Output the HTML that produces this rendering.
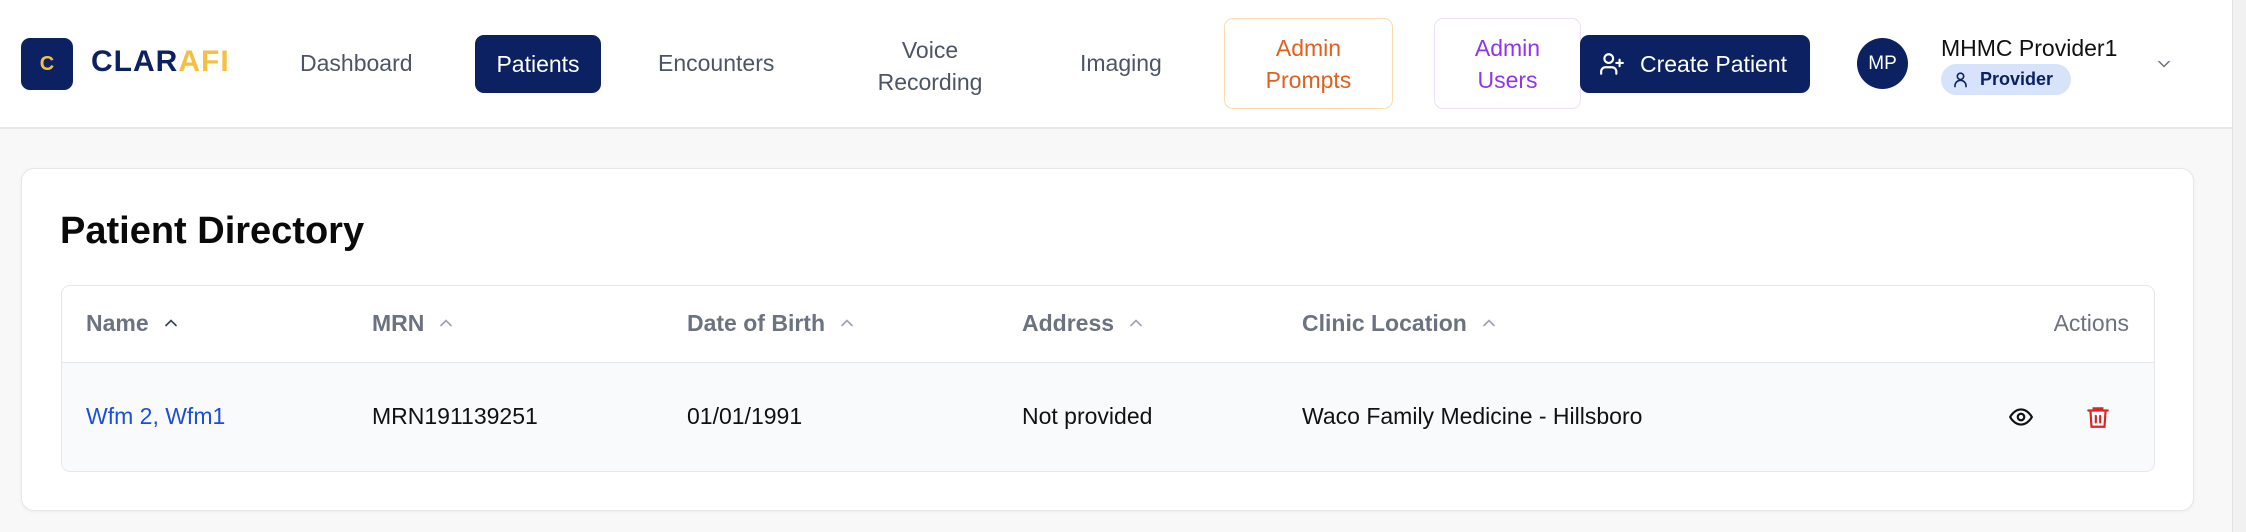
<!DOCTYPE html>
<html><head><meta charset="utf-8"><style>
*{box-sizing:border-box;margin:0;padding:0}
body{width:2246px;height:532px;background:#f8f8f9;font-family:"Liberation Sans",sans-serif;position:relative;overflow:hidden;color:#111827}
.a{position:absolute}
.hdr{left:0;top:0;width:2232px;height:129px;background:#fff;border-bottom:2px solid #e5e7eb}
.nav{font-size:23px;color:#4b5563;white-space:nowrap}
.sb{left:2232px;top:0;width:14px;height:532px;background:#f1f1f1;border-left:1px solid #e2e2e2}
.th{font-size:23px;color:#6b7280;font-weight:bold;top:310px;white-space:nowrap}
.td{font-size:23px;color:#111;top:403px;white-space:nowrap}
.car{display:inline-block;margin-left:12px;vertical-align:-2px}
</style></head><body>
<div class="a hdr"></div>
<div class="a sb"></div>
<div class="a" style="left:21px;top:38px;width:52px;height:52px;background:#0b2161;border-radius:9px;color:#f5c042;font-weight:bold;font-size:20px;text-align:center;line-height:52px">C</div>
<div class="a" style="left:91px;top:45px;font-size:30px;font-weight:bold;color:#0b2161;letter-spacing:1px">CLAR<span style="color:#f5c042">AFI</span></div>
<div class="a nav" style="left:300px;top:50px">Dashboard</div>
<div class="a" style="left:475px;top:35px;width:126px;height:58px;background:#0b2161;border-radius:9px;color:#fff;font-size:23px;text-align:center;line-height:58px">Patients</div>
<div class="a nav" style="left:658px;top:50px">Encounters</div>
<div class="a nav" style="left:860px;top:34px;width:140px;text-align:center;line-height:32px">Voice<br>Recording</div>
<div class="a nav" style="left:1080px;top:50px">Imaging</div>
<div class="a" style="left:1224px;top:18px;width:169px;height:91px;border:1.5px solid #fcd9ae;border-radius:9px;color:#e0601f;font-size:23px;text-align:center;line-height:32px;padding-top:13px">Admin<br>Prompts</div>
<div class="a" style="left:1434px;top:18px;width:147px;height:91px;border:1.5px solid #ece0fc;border-radius:9px;color:#9333ea;font-size:23px;text-align:center;line-height:32px;padding-top:13px">Admin<br>Users</div>
<div class="a" style="left:1580px;top:35px;width:230px;height:58px;background:#0b2161;border-radius:9px;color:#fff;font-size:23px;line-height:58px;padding-left:60px">Create Patient</div>
<svg class="a" style="left:1599px;top:51px" width="26" height="26" viewBox="0 0 24 24" fill="none" stroke="#fff" stroke-width="2" stroke-linecap="round"><path d="M16 21v-2a4 4 0 0 0-4-4H6a4 4 0 0 0-4 4v2"/><circle cx="9" cy="7" r="4"/><path d="M19 8v6M22 11h-6"/></svg>
<div class="a" style="left:1857px;top:38px;width:51px;height:51px;border-radius:50%;background:#0b2161;color:#fff;font-size:19px;text-align:center;line-height:51px">MP</div>
<div class="a" style="left:1941px;top:35px;font-size:23px;color:#111">MHMC Provider1</div>
<div class="a" style="left:1941px;top:64px;width:130px;height:31px;border-radius:16px;background:#d6e3fb;color:#0b2161;font-weight:bold;font-size:18px;line-height:31px;padding-left:39px">Provider</div>
<svg class="a" style="left:1951px;top:70px" width="19" height="19" viewBox="0 0 24 24" fill="none" stroke="#0b2161" stroke-width="2" stroke-linecap="round"><circle cx="12" cy="8" r="4"/><path d="M5 21v-1a7 7 0 0 1 14 0v1"/></svg>
<svg class="a" style="left:2154px;top:54px" width="20" height="20" viewBox="0 0 24 24" fill="none" stroke="#6b7280" stroke-width="1.8" stroke-linecap="round"><path d="M6 9l6 6 6-6"/></svg>

<div class="a" style="left:21px;top:168px;width:2173px;height:343px;background:#fff;border:1.5px solid #e5e7eb;border-radius:13px;box-shadow:0 1px 3px rgba(0,0,0,.05)"></div>
<div class="a" style="left:60px;top:210px;font-size:38px;font-weight:bold;color:#0a0a0a">Patient Directory</div>
<div class="a" style="left:61px;top:285px;width:2094px;height:187px;border:1.5px solid #e5e7eb;border-radius:9px;overflow:hidden;background:#fff">
<div style="position:absolute;left:0;top:76px;width:100%;height:111px;background:#f9fafb;border-top:1.5px solid #e5e7eb"></div></div>

<div class="a th" style="left:86px">Name<svg class="car" width="20" height="20" viewBox="0 0 24 24" fill="none" stroke="#374151" stroke-width="2" stroke-linecap="round"><path d="M6 15l6-6 6 6"/></svg></div>
<div class="a th" style="left:372px">MRN<svg class="car" width="20" height="20" viewBox="0 0 24 24" fill="none" stroke="#9ca3af" stroke-width="2" stroke-linecap="round"><path d="M6 15l6-6 6 6"/></svg></div>
<div class="a th" style="left:687px">Date of Birth<svg class="car" width="20" height="20" viewBox="0 0 24 24" fill="none" stroke="#9ca3af" stroke-width="2" stroke-linecap="round"><path d="M6 15l6-6 6 6"/></svg></div>
<div class="a th" style="left:1022px">Address<svg class="car" width="20" height="20" viewBox="0 0 24 24" fill="none" stroke="#9ca3af" stroke-width="2" stroke-linecap="round"><path d="M6 15l6-6 6 6"/></svg></div>
<div class="a th" style="left:1302px">Clinic Location<svg class="car" width="20" height="20" viewBox="0 0 24 24" fill="none" stroke="#9ca3af" stroke-width="2" stroke-linecap="round"><path d="M6 15l6-6 6 6"/></svg></div>
<div class="a th" style="left:1900px;width:229px;text-align:right;font-weight:normal">Actions</div>

<div class="a td" style="left:86px;color:#1d4ed8">Wfm 2, Wfm1</div>
<div class="a td" style="left:372px">MRN191139251</div>
<div class="a td" style="left:687px">01/01/1991</div>
<div class="a td" style="left:1022px">Not provided</div>
<div class="a td" style="left:1302px">Waco Family Medicine - Hillsboro</div>
<svg class="a" style="left:2008px;top:404px" width="26" height="26" viewBox="0 0 24 24" fill="none" stroke="#111" stroke-width="2" stroke-linecap="round"><path d="M2 12s3.5-7 10-7 10 7 10 7-3.5 7-10 7S2 12 2 12z"/><circle cx="12" cy="12" r="3"/></svg>
<svg class="a" style="left:2085px;top:403px" width="26" height="28" viewBox="0 0 24 24" fill="none" stroke="#dc2626" stroke-width="2" stroke-linecap="round"><path d="M3 6h18M8 6V4h8v2M19 6l-1 15H6L5 6M10 11v6M14 11v6"/></svg>
</body></html>
